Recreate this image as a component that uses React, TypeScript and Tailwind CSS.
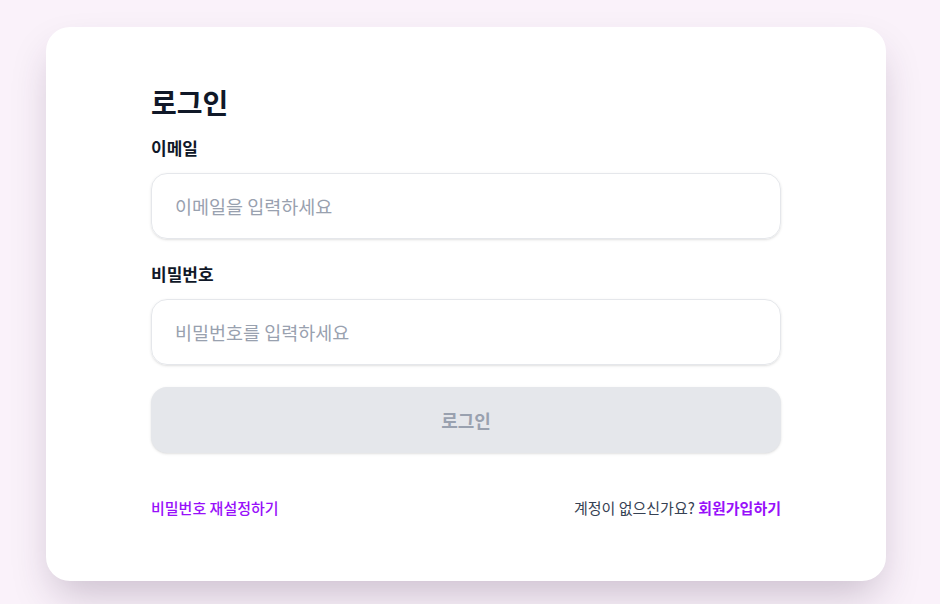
import React, { useState } from 'react';

const font = { fontFamily: '"Noto Sans CJK KR", "Noto Sans", sans-serif' };

const App: React.FC = () => {
  const [email, setEmail] = useState('');
  const [password, setPassword] = useState('');

  const canSubmit = email.length > 0 && password.length > 0;

  return (
    <div className="min-h-[604px] w-full bg-[#faf2fa] pl-[46px] pt-[27px]" style={font}>
      <div className="w-[840px] h-[554px] bg-white rounded-3xl shadow-[0_20px_40px_-8px_rgba(60,30,70,0.25)] px-[105px] pt-[55px]">
        <h1 className="text-[28px] font-bold text-gray-900 leading-[40px]">로그인</h1>

        <label className="block mt-[14px] text-[17px] font-semibold text-gray-900 leading-[24px]">이메일</label>
        <input
          type="email"
          value={email}
          onChange={(e) => setEmail(e.target.value)}
          placeholder="이메일을 입력하세요"
          className="mt-[13px] w-full h-[66px] px-[23px] rounded-2xl border border-gray-200 shadow-sm text-[18.5px] text-gray-900 placeholder:text-gray-400 outline-none"
        />

        <label className="block mt-[23px] text-[17px] font-semibold text-gray-900 leading-[24px]">비밀번호</label>
        <input
          type="password"
          value={password}
          onChange={(e) => setPassword(e.target.value)}
          placeholder="비밀번호를 입력하세요"
          className="mt-[13px] w-full h-[66px] px-[23px] rounded-2xl border border-gray-200 shadow-sm text-[18.5px] text-gray-900 placeholder:text-gray-400 outline-none"
        />

        <button
          disabled={!canSubmit}
          className={`mt-[22px] w-full h-[66px] rounded-2xl text-lg font-bold shadow-sm ${
            canSubmit ? 'bg-purple-600 text-white' : 'bg-gray-200 text-gray-400 cursor-not-allowed'
          }`}
        >
          로그인
        </button>

        <div className="mt-[45px] flex justify-between items-center text-[15px] leading-5">
          <a href="#" className="text-purple-600 font-medium">비밀번호 재설정하기</a>
          <p className="text-gray-700">
            계정이 없으신가요? <a href="#" className="text-purple-600 font-bold">회원가입하기</a>
          </p>
        </div>
      </div>
    </div>
  );
};

export default App;
